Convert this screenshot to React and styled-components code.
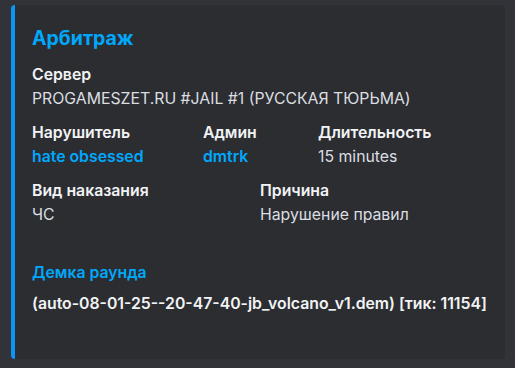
import React from "react";
import styled, { createGlobalStyle } from "styled-components";

const Global = createGlobalStyle`
  html, body { margin: 0; padding: 0; background: #313338; }
  body { font-family: Inter, "Noto Sans", sans-serif; -webkit-font-smoothing: antialiased; }
`;

const Page = styled.div`
  width: 515px;
  height: 368px;
  box-sizing: border-box;
  padding: 5px 10px 9px 11px;
  background: #313338;
`;

const Embed = styled.article`
  box-sizing: border-box;
  height: 100%;
  background: #2b2d31;
  border-left: 4px solid #0a96f7;
  border-radius: 4px;
  padding: 22px 16px 16px 17px;
  display: flex;
  flex-direction: column;
`;

const Title = styled.h1`
  margin: 0 0 16px;
  font-size: 19.5px;
  line-height: 22px;
  font-weight: 700;
  color: #00a8fc;
`;

const Row = styled.div`
  display: grid;
  grid-template-columns: ${(p) => p.$cols || "1fr"};
  margin-bottom: ${(p) => p.$gap ?? 14}px;
`;

const Field = styled.div`
  display: flex;
  flex-direction: column;
  min-width: 0;
`;

const Name = styled.div`
  font-size: 15.8px;
  line-height: 20px;
  font-weight: 600;
  color: ${(p) => (p.$link ? "#00a8fc" : "#f2f3f5")};
  margin-bottom: ${(p) => p.$mb ?? 4}px;
  white-space: nowrap;
`;

const Value = styled.div`
  font-size: 15.8px;
  line-height: 20px;
  font-weight: ${(p) => (p.$bold ? 600 : 400)};
  color: ${(p) => (p.$link ? "#00a8fc" : p.$bold ? "#f2f3f5" : "#dbdee1")};
  white-space: nowrap;
`;

export default function App() {
  return (
    <>
      <Global />
      <Page>
        <Embed>
          <Title>Арбитраж</Title>
          <Row>
            <Field>
              <Name>Сервер</Name>
              <Value>PROGAMESZET.RU #JAIL #1 (РУССКАЯ ТЮРЬМА)</Value>
            </Field>
          </Row>
          <Row $cols="171px 115px 1fr">
            <Field>
              <Name>Нарушитель</Name>
              <Value $link $bold>hate obsessed</Value>
            </Field>
            <Field>
              <Name>Админ</Name>
              <Value $link $bold>dmtrk</Value>
            </Field>
            <Field>
              <Name>Длительность</Name>
              <Value>15 minutes</Value>
            </Field>
          </Row>
          <Row $cols="228px 1fr" $gap={38}>
            <Field>
              <Name>Вид наказания</Name>
              <Value>ЧС</Value>
            </Field>
            <Field>
              <Name>Причина</Name>
              <Value>Нарушение правил</Value>
            </Field>
          </Row>
          <Row $gap={0}>
            <Field>
              <Name $link $mb={11}>Демка раунда</Name>
              <Value $bold>(auto-08-01-25--20-47-40-jb_volcano_v1.dem) [тик: 11154]</Value>
            </Field>
          </Row>
        </Embed>
      </Page>
    </>
  );
}
